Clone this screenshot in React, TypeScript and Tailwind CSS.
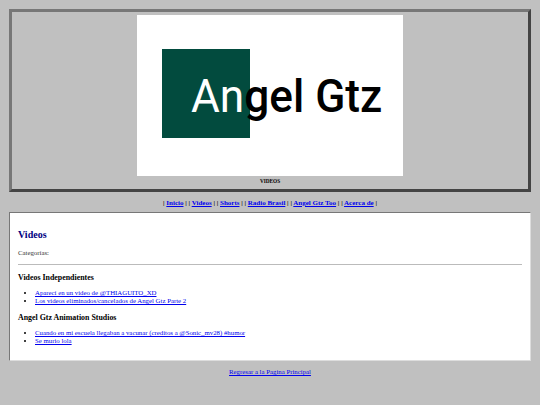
const App = () => {
  return (
    <div className="min-h-[405px] bg-[#c0c0c0] px-[9px] pt-[9px] font-['Liberation_Serif',serif] text-[6.8px] leading-[8px] text-black">
      <header className="flex h-[183px] flex-col items-center border-[3px] border-t-[#777777] border-r-[#444444] border-b-[#444444] border-l-[#777777] pt-[3px]">
        <div className="relative h-[161px] w-[266px] overflow-hidden bg-white font-['Roboto',sans-serif]">
          <div className="absolute top-[34px] left-[25px] h-[89px] w-[88px] bg-[#024b3e]" />
          <div className="absolute top-[53px] left-[54px] origin-left scale-x-[0.94] whitespace-nowrap text-[47px] leading-[55px] font-medium">
            <span className="font-normal text-white">An</span>gel Gtz
          </div>
        </div>
        <p className="mt-[1px] text-[5.25px] font-bold leading-[9px]">VIDEOS</p>
      </header>

      <nav className="mt-[6px] text-center text-[7px] font-bold leading-[10px]">
        | <a href="#" className="text-[#0000ee] underline">Inicio</a> | | <a href="#" className="text-[#0000ee] underline">Videos</a> | | <a href="#" className="text-[#0000ee] underline">Shorts</a> | | <a href="#" className="text-[#0000ee] underline">Radio Brasil</a> | | <a href="#" className="text-[#0000ee] underline">Angel Gtz Too</a> | | <a href="#" className="text-[#0000ee] underline">Acerca de</a> |
      </nav>

      <main className="mt-[4px] h-[149px] border border-t-[#777777] border-r-[#dddddd] border-b-[#dddddd] border-l-[#777777] bg-white px-[8px] pt-[15px]">
        <h2 className="text-[10px] font-bold leading-[13px] text-[#000080]">Videos</h2>
        <p className="mt-[8px] text-[#333333]">Categorías:</p>
        <hr className="mt-[7px] border-t border-[#bbbbbb]" />
        <h3 className="mt-[8px] text-[7.9px] font-bold leading-[10px]">Videos Independientes</h3>
        <ul className="mt-[6px] list-disc pl-[17px]">
          <li><a href="#" className="text-[#0000ee] underline">Aparecí en un video de @THIAGUITO_XD</a></li>
          <li><a href="#" className="text-[#0000ee] underline">Los videos eliminados/cancelados de Angel Gtz Parte 2</a></li>
        </ul>
        <h3 className="mt-[8px] text-[7.9px] font-bold leading-[10px]">Angel Gtz Animation Studios</h3>
        <ul className="mt-[6px] list-disc pl-[17px]">
          <li><a href="#" className="text-[#0000ee] underline">Cuando en mi escuela llegaban a vacunar (creditos a @Sonic_mv28) #humor</a></li>
          <li><a href="#" className="text-[#0000ee] underline">Se murio lola</a></li>
        </ul>
      </main>

      <p className="mt-[6px] text-center leading-[10px]">
        <a href="#" className="text-[#0000ee] underline">Regresar a la Pagina Principal</a>
      </p>
    </div>
  );
};

export default App;
